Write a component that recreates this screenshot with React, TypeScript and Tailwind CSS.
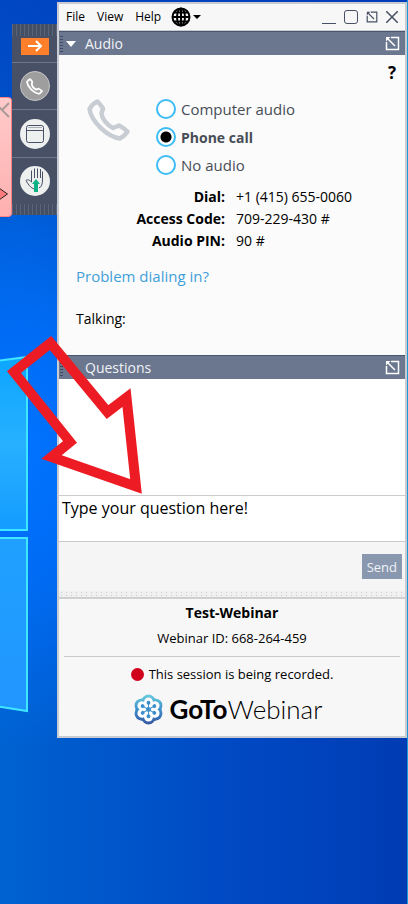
import React from 'react';
import { clsx } from 'clsx';

const PhoneIcon = ({ className }: { className?: string }) => (
	<svg viewBox="0 0 43 42" className={className} fill="none" stroke="currentColor" strokeWidth="4.5" strokeLinejoin="round" aria-hidden="true">
		<path d="M10.5 2.5C12 4 14.5 7 16 9.5L14.5 14.5C15 20 20 26 26 29L32 26.5C35 28 38 30 40.5 32.5C39 35 36 38 33 39.5C20 38 4 22 2.5 10C4 7 7 4 10.5 2.5z" />
	</svg>
);

const GlobeIcon = () => (
	<svg viewBox="0 0 20 20" className="size-5" fill="none" stroke="black" strokeWidth="2" aria-hidden="true">
		<circle cx="10" cy="10" r="8.5" />
		<ellipse cx="10" cy="10" rx="4" ry="8.5" />
		<path d="M10 1v18M1 10h18M3 5.5h14M3 14.5h14" />
	</svg>
);

const PopOutIcon = ({ className }: { className?: string }) => (
	<svg viewBox="0 0 15 15" className={className} fill="none" stroke="currentColor" strokeWidth="1.5" aria-hidden="true">
		<path d="M6 1.5h7.5v12H1.5V6M3 3l7 7" />
		<path d="M1 5.5V1h4.5z" fill="currentColor" stroke="none" />
	</svg>
);

const WallpaperLogo = () => (
	<svg className="pointer-events-none absolute left-0 top-0 h-[904px] w-[57px]" viewBox="0 0 57 904" aria-hidden="true">
		<defs>
			<linearGradient id="pane" x1="0" y1="0" x2="0" y2="1">
				<stop offset="0" stopColor="#0ca6ff" />
				<stop offset="0.5" stopColor="#27b0ff" />
				<stop offset="1" stopColor="#149cff" />
			</linearGradient>
			<linearGradient id="pane2" x1="0" y1="0" x2="0" y2="1">
				<stop offset="0" stopColor="#1fa0ff" />
				<stop offset="1" stopColor="#2196ff" />
			</linearGradient>
		</defs>
		<path d="M-4 361L27 357V530H-4z" fill="url(#pane)" />
		<path d="M-4 538H27V711L-4 706z" fill="url(#pane2)" />
		<path d="M-4 361L27 357V530H-4M-4 538H27V711L-4 706" fill="none" stroke="#3fe6ff" strokeWidth="2" />
	</svg>
);

const MenuButton = ({ label }: { label: string }) => (
	<button type="button" className="text-[12px] leading-5">
		{label}
	</button>
);

const PanelHeader = ({ title, arrow }: { title: string; arrow?: boolean }) => (
	<div className="flex h-6 items-center border-t border-[#4a5570] bg-[#6b778f] pr-[5px] text-white">
		<span className="ml-px h-4 w-[3px] bg-[repeating-linear-gradient(to_bottom,#3f4a63_0_1px,transparent_1px_3px)]" />
		<button type="button" className="ml-[3px] flex items-center" aria-label={`Toggle ${title}`}>
			<svg viewBox="0 0 10 6" className={clsx('h-1.5 w-2.5', !arrow && 'opacity-30')} aria-hidden="true">
				<path d="M0 0h10L5 6z" fill="currentColor" />
			</svg>
		</button>
		<h2 className="ml-[9px] flex-1 text-[14px] leading-5 text-[#f1f3f7]">{title}</h2>
		<button type="button" aria-label={`Undock ${title}`}>
			<PopOutIcon className="size-[15px]" />
		</button>
	</div>
);

const grip = 'bg-[repeating-linear-gradient(to_right,#5a647a_0_1px,#454f64_1px_4px)]';

const ControlRail = () => (
	<nav className="z-10 mt-6 flex h-[191px] w-[45px] shrink-0 flex-col bg-[#475065]">
		<div className={clsx('h-3', grip)} />
		<div className="flex h-[27px] items-center justify-center border-b border-[#6b778f] pb-1.5">
			<button type="button" aria-label="Hide panel" className="flex h-[17px] w-7 items-center justify-center bg-[#ff7f2a] text-white">
				<svg viewBox="0 0 16 12" className="h-3 w-4" fill="none" stroke="currentColor" strokeWidth="2" aria-hidden="true">
					<path d="M1 6h13M9 1l5 5-5 5" />
				</svg>
			</button>
		</div>
		<div className="flex h-[47px] items-center justify-center border-b border-[#6b778f]">
			<button type="button" aria-label="Phone" className="flex size-[30px] items-center justify-center rounded-full border border-[#c6c6c6] bg-[#9e9e9e] text-white">
				<PhoneIcon className="size-[17px]" />
			</button>
		</div>
		<div className="flex h-12 items-center justify-center border-b border-[#6b778f]">
			<button type="button" aria-label="Screen" className="flex size-[30px] items-center justify-center rounded-full bg-[#edf0ef] text-[#475065]">
				<svg viewBox="0 0 18 18" className="size-[18px]" fill="none" stroke="currentColor" aria-hidden="true">
					<rect x="0.5" y="0.5" width="17" height="17" rx="2" />
					<path d="M1 5.5h16" />
					<path d="M2 2.5h14" opacity="0.4" />
				</svg>
			</button>
		</div>
		<div className="flex flex-1 items-center justify-center">
			<button type="button" aria-label="Raise hand" className="flex size-[30px] items-center justify-center rounded-full bg-[#edf0ef] text-[#475065]">
				<svg viewBox="0 0 30 30" className="size-[30px]" fill="none" stroke="currentColor" aria-hidden="true">
					<path d="M11.5 13V4.5M14.5 12V2.5M17.5 12V2.5M20.5 12V3M22.5 14V5.5M11.5 12v4c-2-2-4-3-5.5-1.500 2 3 3.500 7 8 8.500M22.500 14c0 4-1 7-3.500 8" />
					<path d="M16 13l4 5h-2v8h-4v-8h-2z" fill="#0db284" stroke="none" />
				</svg>
			</button>
		</div>
		<div className={clsx('h-[11px]', grip)} />
	</nav>
);

const audioModes = ['Computer audio', 'Phone call', 'No audio'];

const dialInfo = [
	['Dial:', '+1 (415) 655-0060'],
	['Access Code:', '709-229-430 #'],
	['Audio PIN:', '90 #'],
];

const AudioPanel = () => {
	const [mode, setMode] = React.useState('Phone call');

	return (
		<section className="flex h-[300px] flex-col bg-[#fbfbfb]">
			<div className="flex h-10 items-center justify-end pb-1 pr-[9px]">
				<button type="button" aria-label="Help" className="text-[17px] font-bold leading-5">
					?
				</button>
			</div>
			<div className="flex pl-7">
				<PhoneIcon className="mt-1 h-[42px] w-[43px] text-[#c8cdd4]" />
				<div className="ml-[26px]">
					{audioModes.map((item) => (
						<label key={item} className={clsx('flex h-7 items-center gap-[5px] text-[#474d57]', item === mode ? 'text-[14px] font-bold' : 'text-[15px]')}>
							<input
								type="radio"
								name="audio"
								checked={item === mode}
								onChange={() => setMode(item)}
								className="size-5 appearance-none rounded-full border-2 border-[#3cbcf5] bg-white checked:bg-[radial-gradient(circle,#000_5px,transparent_6px)]"
							/>
							{item}
						</label>
					))}
				</div>
			</div>
			<dl className="mt-[7px] grid grid-cols-[166px_1fr] gap-x-[11px] text-[14px] leading-[22px] text-black">
				{dialInfo.map(([name, value]) => (
					<React.Fragment key={name}>
						<dt className="text-right font-bold">{name}</dt>
						<dd>{value}</dd>
					</React.Fragment>
				))}
			</dl>
			<a href="#" className="ml-[17px] mt-3.5 self-start text-[15px] leading-5 text-[#419fd9]">
				Problem dialing in?
			</a>
			<p className="ml-[17px] mt-[23px] text-[14px] leading-5 text-black">Talking:</p>
		</section>
	);
};

const QuestionsPanel = () => (
	<section>
		<div className="h-[116px] bg-white" />
		<textarea
			aria-label="Question"
			defaultValue="Type your question here!"
			className="block h-[46px] w-full resize-none border-t border-[#c9cbce] bg-white px-[3px] text-[16px] leading-6 text-black outline-none"
		/>
		<div className="flex h-[50px] items-center justify-end border-t border-[#c9cbce] bg-[#f5f5f5] pr-[3px]">
			<button type="button" className="h-[25px] bg-[#8998ae] px-[5px] text-[13px] leading-5 text-[#f0f2f6]">
				Send
			</button>
		</div>
		<div className="h-1.5 bg-[#f0f0f0] bg-[radial-gradient(circle,#cfcfcf_1px,transparent_1px)] bg-size-[5px_3px]" />
	</section>
);

const petals = [0, 60, 120, 180, 240, 300];

const DaisyLogo = () => (
	<svg viewBox="0 0 30 32" className="h-[31px] w-[29px]" aria-hidden="true">
		<defs>
			<linearGradient id="daisy" x1="0" y1="0" x2="0" y2="32" gradientUnits="userSpaceOnUse">
				<stop offset="0" stopColor="#6bcfdc" />
				<stop offset="0.5" stopColor="#3d8fcc" />
				<stop offset="1" stopColor="#35559f" />
			</linearGradient>
		</defs>
		<g fill="url(#daisy)">
			<circle cx="15" cy="16" r="13.5" />
			{petals.map((angle) => (
				<circle key={angle} cx={15 + 8.5 * Math.sin((angle * Math.PI) / 180)} cy={16 - 8.5 * Math.cos((angle * Math.PI) / 180)} r="7" />
			))}
		</g>
		<circle cx="15" cy="16" r="9" fill="white" />
		{petals.map((angle) => (
			<g key={angle} transform={`rotate(${angle} 15 16)`}>
				<circle cx="15" cy="8" r="4.5" fill="white" />
				<circle cx="15" cy="9" r="2" fill="#3d8fcc" />
				<path d="M15 9v7" stroke="#3d8fcc" />
			</g>
		))}
		<circle cx="15" cy="16" r="2.5" fill="#3d8fcc" />
	</svg>
);

const SessionFooter = () => (
	<footer className="flex flex-col items-center border-t-2 border-[#cfd0d2] bg-[#f7f7f7] px-[5px] pb-[11px] pt-1 text-black">
		<h1 className="text-[14px] font-bold leading-5">Test-Webinar</h1>
		<p className="mt-[5px] text-[13px] leading-5">Webinar ID: 668-264-459</p>
		<hr className="mt-2 w-full border-[#c9cbce]" />
		<p className="mt-[7px] flex items-center gap-[5px] text-[13px] leading-5">
			<span className="size-[13px] rounded-full bg-[#d0021b]" />
			This session is being recorded.
		</p>
		<div className="mt-2.5 flex items-center gap-[7px] pr-2 font-['Lato',sans-serif] text-[26px] leading-[31px]">
			<DaisyLogo />
			<div>
				<span className="font-bold">GoTo</span>
				<span className="font-light">Webinar</span>
			</div>
		</div>
	</footer>
);

export default function App() {
	return (
		<div className="relative flex min-h-screen items-start overflow-hidden border-r border-[#1c9ad6] bg-[radial-gradient(ellipse_180px_300px_at_20px_450px,#0073ff,#006cf5_40%,transparent),linear-gradient(to_bottom,rgba(0,60,190,0.7),transparent_40%),linear-gradient(to_right,#0062d0,#004ac4_55%,#003cb4)] font-['Open_Sans','Noto_Sans',sans-serif]">
			<WallpaperLogo />
			<aside className="relative mt-[97px] flex h-[120px] w-3 shrink-0 flex-col justify-between rounded-r border border-l-0 border-[#ff8080] bg-linear-to-b from-[#ffcaca] to-[#ffb0b0]">
				<svg viewBox="0 0 10 16" className="mt-1 h-4 w-2.5" fill="none" stroke="#a99a9a" strokeWidth="2" aria-hidden="true">
					<path d="M9 1L2 8l7 7M2 8l-6-6" />
				</svg>
				<svg viewBox="0 0 8 12" className="mb-4 h-3 w-2" aria-hidden="true">
					<path d="M-1 0l8.5 6L-1 12z" fill="#ff7b7b" stroke="#222" />
				</svg>
			</aside>
			<ControlRail />
			<main className="relative mt-0.5 min-w-0 flex-1 border-2 border-[#c8ccd2]">
				<div className="flex h-[27px] items-center border-b border-[#c9cbce] bg-[#f7f7f7] px-[7px] text-black">
					<div className="flex gap-3">
						<MenuButton label="File" />
						<MenuButton label="View" />
						<MenuButton label="Help" />
					</div>
					<button type="button" aria-label="Language" className="ml-2.5 flex items-center gap-0.5">
						<GlobeIcon />
						<svg viewBox="0 0 8 4" className="h-1 w-2" aria-hidden="true">
							<path d="M0 0h8L4 4z" />
						</svg>
					</button>
					<div className="ml-auto flex items-center gap-2 text-[#475065]">
						<button type="button" aria-label="Minimize" className="h-3.5 w-3.5 border-b" />
						<button type="button" aria-label="Maximize" className="size-3.5 rounded-[3px] border" />
						<button type="button" aria-label="Undock">
							<PopOutIcon className="size-3" />
						</button>
						<button type="button" aria-label="Close">
							<svg viewBox="0 0 12 12" className="size-3" stroke="currentColor" strokeWidth="1.5" aria-hidden="true">
								<path d="M0 0l12 12M12 0L0 12" />
							</svg>
						</button>
					</div>
				</div>
				<PanelHeader title="Audio" arrow />
				<AudioPanel />
				<PanelHeader title="Questions" />
				<QuestionsPanel />
				<SessionFooter />
			</main>
			<svg className="pointer-events-none absolute left-0 top-[330px] z-20 h-[170px] w-[150px]" viewBox="0 330 150 170" fill="none" stroke="#ed1c24" strokeWidth="10" strokeMiterlimit="10" aria-hidden="true">
				<path d="M14 372L50.5 343 107.5 412 126.5 397.5 136 486.5 51.5 457 70 442z" />
			</svg>
		</div>
	);
}
